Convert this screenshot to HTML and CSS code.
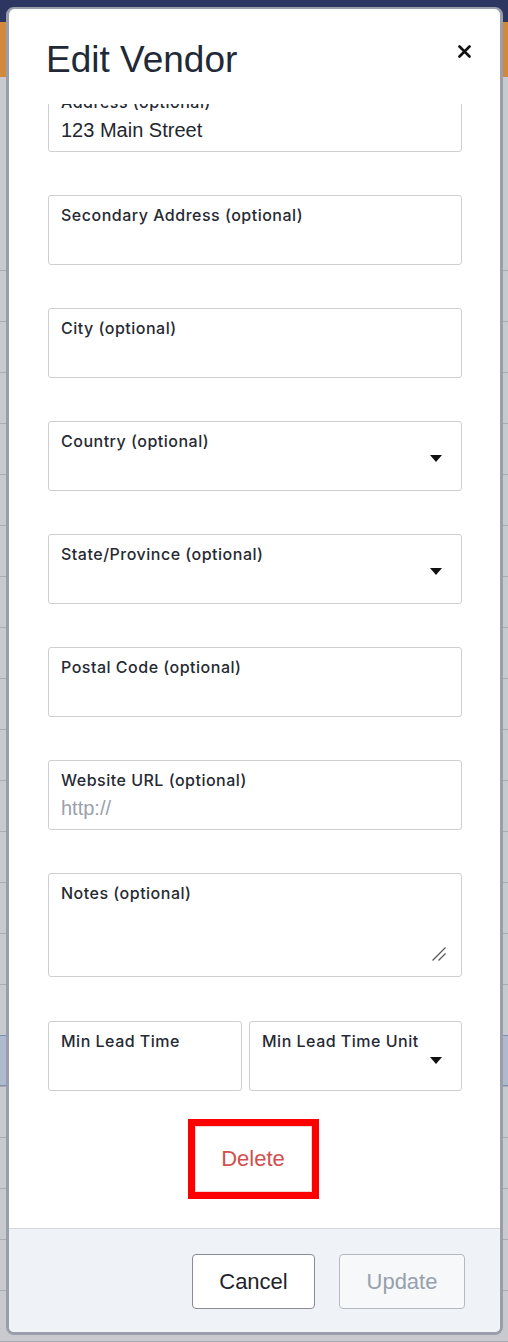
FILE: index.html
```html
<!DOCTYPE html>
<html>
<head>
<meta charset="utf-8">
<link rel="stylesheet" href="styles.css">
</head>
<body>
<div class="page">
  <div class="topbar"></div>
  <div class="brandbar"></div>
  <div class="pagehead"></div>
  <div class="rows">
    <div class="row"></div><div class="row"></div><div class="row"></div><div class="row"></div>
    <div class="row"></div><div class="row"></div><div class="row"></div><div class="row"></div>
    <div class="row"></div><div class="row"></div><div class="row"></div><div class="row"></div>
    <div class="row"></div><div class="row"></div><div class="row"></div>
    <div class="row row-sel"></div>
    <div class="row"></div><div class="row"></div><div class="row"></div><div class="row"></div>
    <div class="row"></div><div class="row"></div>
  </div>
</div>

<div class="modal">
  <div class="modal-head">
    <h1 class="title">Edit Vendor</h1>
    <svg class="close" width="13" height="13" viewBox="0 0 13 13"><path d="M1.5 1.5 L11.5 11.5 M11.5 1.5 L1.5 11.5" stroke="#111" stroke-width="2.6" stroke-linecap="round"/></svg>
  </div>
  <div class="modal-body">
    <div class="form">
      <div class="field">
        <div class="field-main">
          <div class="label">Address (optional)</div>
          <div class="value">123 Main Street</div>
        </div>
      </div>
      <div class="field">
        <div class="field-main"><div class="label">Secondary Address (optional)</div><div class="value"></div></div>
      </div>
      <div class="field">
        <div class="field-main"><div class="label">City (optional)</div><div class="value"></div></div>
      </div>
      <div class="field">
        <div class="field-main"><div class="label">Country (optional)</div><div class="value"></div></div>
        <span class="caret"></span>
      </div>
      <div class="field">
        <div class="field-main"><div class="label">State/Province (optional)</div><div class="value"></div></div>
        <span class="caret"></span>
      </div>
      <div class="field">
        <div class="field-main"><div class="label">Postal Code (optional)</div><div class="value"></div></div>
      </div>
      <div class="field">
        <div class="field-main"><div class="label">Website URL (optional)</div><div class="value placeholder">http://</div></div>
      </div>
      <div class="field field-notes">
        <div class="field-main"><div class="label">Notes (optional)</div></div>
        <svg class="resize" width="14" height="14" viewBox="0 0 14 14"><path d="M13.5 0.5 L0.5 13.5 M13.5 6.5 L6.5 13.5" stroke="#555" stroke-width="1.2"/></svg>
      </div>
      <div class="lead-row">
        <div class="field">
          <div class="field-main"><div class="label">Min Lead Time</div><div class="value"></div></div>
        </div>
        <div class="field">
          <div class="field-main"><div class="label">Min Lead Time Unit</div><div class="value"></div></div>
          <span class="caret caret-unit"></span>
        </div>
      </div>
      <div class="delete-wrap">
        <div class="delete-box"><button class="delete">Delete</button></div>
      </div>
    </div>
  </div>
  <div class="modal-foot">
    <button class="btn">Cancel</button>
    <button class="btn btn-disabled">Update</button>
  </div>
</div>
</body>
</html>
```

FILE: styles.css
```css
* { box-sizing: border-box; }
html, body { margin: 0; padding: 0; }
body {
  width: 508px;
  height: 1342px;
  overflow: hidden;
  background: #c7c9ce;
  font-family: "Liberation Sans", Arial, sans-serif;
  position: relative;
}
.page { width: 508px; }
.topbar { height: 22px; background: #2c3660; }
.brandbar { height: 55px; background: #cf8a3e; }
.pagehead { height: 193px; background: #c8cacf; }
.rows { display: flex; flex-direction: column; }
.row { height: 51px; border-top: 1px solid #a9acb3; background: #c8cacf; }
.row-sel { background: #aebace; border-top: 1px solid #7d90b2; border-bottom: 1px solid #7d90b2; }

.modal {
  position: absolute;
  left: 6px;
  top: 7px;
  width: 497px;
  height: 1328px;
  border: 3px solid #9a9eaa;
  border-top-width: 2px;
  border-radius: 8px;
  background: #fff;
  display: flex;
  flex-direction: column;
  overflow: hidden;
}
.modal-head {
  display: flex;
  justify-content: space-between;
  align-items: flex-start;
  padding: 29px 29px 22px 37px;
  flex: none;
}
.title {
  margin: 0;
  font-size: 37px;
  line-height: 44px;
  font-weight: 400;
  color: #222936;
}
.close { margin-top: 7px; display: block; }

.modal-body {
  flex: 1;
  overflow: hidden;
  position: relative;
}
.form {
  margin-top: -22px;
  padding: 0 38px 0 39px;
  display: flex;
  flex-direction: column;
  gap: 43px;
}
.field {
  height: 70px;
  border: 1px solid #cdcfd3;
  border-radius: 3px;
  padding: 10px 19px 0 12px;
  display: flex;
  align-items: center;
  background: #fff;
}
.field-main { flex: 1; align-self: flex-start; min-width: 0; }
.label {
  font-family: Inter, "Liberation Sans", sans-serif;
  font-size: 16px;
  line-height: 18px;
  font-weight: 500;
  letter-spacing: 0.5px;
  color: #262a33;
  white-space: nowrap;
}
.value {
  margin-top: 5px;
  height: 28px;
  font-size: 20px;
  line-height: 28px;
  color: #23262d;
}
.placeholder { color: #9ba1ab; }
.caret {
  width: 0; height: 0;
  border-left: 6px solid transparent;
  border-right: 6px solid transparent;
  border-top: 7px solid #111;
  margin-top: -6px;
  flex: none;
}
.caret-unit { margin-top: -1px; }
.field-notes {
  height: 104px;
  align-items: flex-end;
  padding-bottom: 15px;
  padding-right: 15px;
}
.resize { display: block; flex: none; }
.lead-row {
  display: grid;
  grid-template-columns: 194px 1fr;
  gap: 7px;
  margin-top: 1px;
}
.lead-row .field { padding-right: 19px; }
.delete-wrap {
  display: flex;
  justify-content: center;
  margin-top: -15px;
  padding-right: 4px;
}
.delete-box {
  width: 131px;
  height: 80px;
  border: 7px solid #ff0000;
  display: flex;
}
.delete {
  flex: 1;
  border: 1px solid #f1d6d6;
  background: #fff;
  font-family: "Liberation Sans", Arial, sans-serif;
  font-size: 22px;
  color: #d0504f;
  padding: 0;
}

.modal-foot {
  flex: none;
  height: 104px;
  border-top: 1px solid #d4d8de;
  background: #eff2f6;
  display: flex;
  justify-content: flex-end;
  align-items: flex-start;
  gap: 24px;
  padding: 25px 35px 0 0;
}
.btn {
  height: 55px;
  width: 123px;
  border: 1px solid #878c96;
  border-radius: 4px;
  background: #fff;
  font-family: "Liberation Sans", Arial, sans-serif;
  font-size: 22px;
  color: #1f232b;
  padding: 0;
}
.btn-disabled {
  width: 126px;
  border-color: #b4b9c2;
  background: #f6f8fa;
  color: #98a0ad;
}
```
